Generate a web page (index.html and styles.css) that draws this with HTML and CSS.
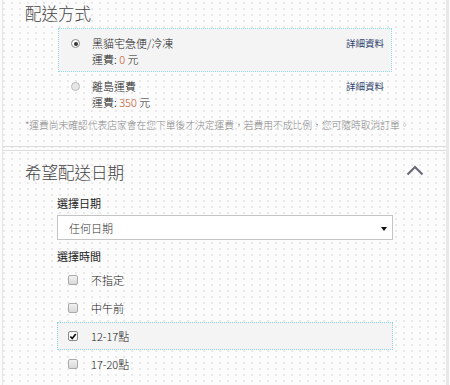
FILE: index.html
```html
<!DOCTYPE html>
<html lang="zh-Hant">
<head>
  <meta charset="UTF-8" />
  <title>配送方式</title>
  <link rel="stylesheet" href="styles.css">
</head>
<body>
  <div class="page">
    <section class="block shipping">
      <h2 class="block-title">配送方式</h2>
      <div class="options">
        <div class="option selected">
          <span class="radio on"></span>
          <div class="option-text">
            <div>黑貓宅急便/冷凍</div>
            <div>運費: <span class="fee">0</span> 元</div>
          </div>
          <a class="detail">詳細資料</a>
        </div>
        <div class="option second">
          <span class="radio"></span>
          <div class="option-text">
            <div>離島運費</div>
            <div>運費: <span class="fee">350</span> 元</div>
          </div>
          <a class="detail">詳細資料</a>
        </div>
      </div>
      <p class="note">*運費尚未確認代表店家會在您下單後才決定運費，若費用不成比例，您可隨時取消訂單。</p>
    </section>

    <section class="block delivery">
      <div class="block-head">
        <h2 class="block-title">希望配送日期</h2>
        <svg class="chevron" width="18" height="11" viewBox="0 0 18 11">
          <polyline points="1.5,9.5 9,2 16.5,9.5" fill="none" stroke="#6f6a78" stroke-width="2.2"/>
        </svg>
      </div>
      <div class="form">
        <div class="label">選擇日期</div>
        <div class="select">
          <span>任何日期</span>
          <span class="caret"></span>
        </div>
        <div class="label time-label">選擇時間</div>
        <div class="checks">
          <div class="check-row"><span class="box"></span><span>不指定</span></div>
          <div class="check-row"><span class="box"></span><span>中午前</span></div>
          <div class="check-row selected"><span class="box on">
            <svg width="9" height="9" viewBox="0 0 9 9"><polyline points="1.5,4.5 3.6,6.8 7.6,1.6" fill="none" stroke="#111" stroke-width="1.8"/></svg>
          </span><span>12-17點</span></div>
          <div class="check-row"><span class="box"></span><span>17-20點</span></div>
        </div>
      </div>
    </section>
  </div>
</body>
</html>
```

FILE: styles.css
```css
* {
  box-sizing: border-box;
}

body {
  margin: 0;
  font-family: "Noto Sans CJK TC", "Noto Sans", sans-serif;
  font-weight: 300;
  color: #333;
  background-color: #fcfcfc;
  background-image: radial-gradient(circle, #e8e8e8 0.7px, transparent 0.9px);
  background-size: 8px 6px;
  height: 385px;
  overflow: hidden;
}

.page {
  margin-left: 2px;
  width: 447px;
  border-left: 1px solid #e4e4e4;
  border-right: 3px solid #e8e8e8;
  min-height: 385px;
}

.block-title {
  margin: 0;
  font-size: 16.5px;
  font-weight: 300;
  line-height: 24px;
  color: #444;
  padding-left: 22px;
}

/* shipping */
.shipping {
  padding: 1px 0 14px;
  border-bottom: 1px solid #dcdcdc;
  margin-bottom: 3px;
}

.options {
  margin: 3px 0 0 55px;
  width: 334px;
}

.option {
  display: flex;
  align-items: flex-start;
  font-size: 11px;
  line-height: 16px;
  padding: 6px 7px 4px 12px;
  border: 1px solid transparent;
}

.option.second {
  padding-top: 5px;
}

.option.selected {
  border: 1px dotted #92dcea;
  background: #f4f4f4;
}

.radio {
  width: 9px;
  height: 9px;
  border-radius: 50%;
  margin-top: 4px;
  border: 1px solid #bbb;
  background: #e6e6e6;
  flex: none;
  position: relative;
}

.radio.on {
  background: #fff;
  border-color: #888;
}

.radio.on::after {
  content: "";
  position: absolute;
  left: 1.5px;
  top: 1.5px;
  width: 4px;
  height: 4px;
  border-radius: 50%;
  background: #333;
}

.option-text {
  flex: 1;
  margin-left: 12px;
  color: #222;
}

.fee {
  color: #c8501e;
}

.detail {
  font-size: 9.5px;
  color: #2d3f6e;
  line-height: 16px;
  font-weight: 400;
}

.note {
  margin: 3px 0 0;
  padding-left: 22px;
  font-size: 9.75px;
  line-height: 14px;
  color: #888;
  white-space: nowrap;
}

/* delivery */
.delivery {
  border-top: 1px solid #dcdcdc;
  padding-top: 9px;
}

.block-head {
  display: flex;
  justify-content: space-between;
  align-items: center;
  padding-right: 22px;
}

.chevron {
  margin-top: -3px;
}

.form {
  margin: 11px 0 0 54px;
  width: 336px;
}

.label {
  font-size: 11px;
  line-height: 16px;
  color: #222;
  font-weight: 400;
}

.select {
  margin-top: 4px;
  height: 25px;
  border: 1px solid #c4c4c4;
  background: #fff;
  display: flex;
  align-items: center;
  justify-content: space-between;
  padding: 0 5px 0 11px;
  font-size: 11px;
  color: #333;
}

.caret {
  width: 0;
  height: 0;
  border-left: 3px solid transparent;
  border-right: 3px solid transparent;
  border-top: 4px solid #111;
  margin-top: 2px;
}

.time-label {
  margin-top: 8px;
}

.checks {
  margin-top: 2px;
}

.check-row {
  display: flex;
  align-items: center;
  height: 28px;
  padding-left: 10px;
  border: 1px solid transparent;
  font-size: 11px;
  color: #222;
}

.check-row.selected {
  border: 1px dotted #8fcfee;
  background: #f4f4f4;
}

.box {
  width: 10px;
  height: 10px;
  border: 1px solid #aaa;
  border-radius: 2px;
  background: linear-gradient(#f2f2f2, #d8d8d8);
  margin-right: 13px;
  display: flex;
  align-items: center;
  justify-content: center;
}

.box.on {
  background: #fafafa;
  border-color: #888;
}
```
